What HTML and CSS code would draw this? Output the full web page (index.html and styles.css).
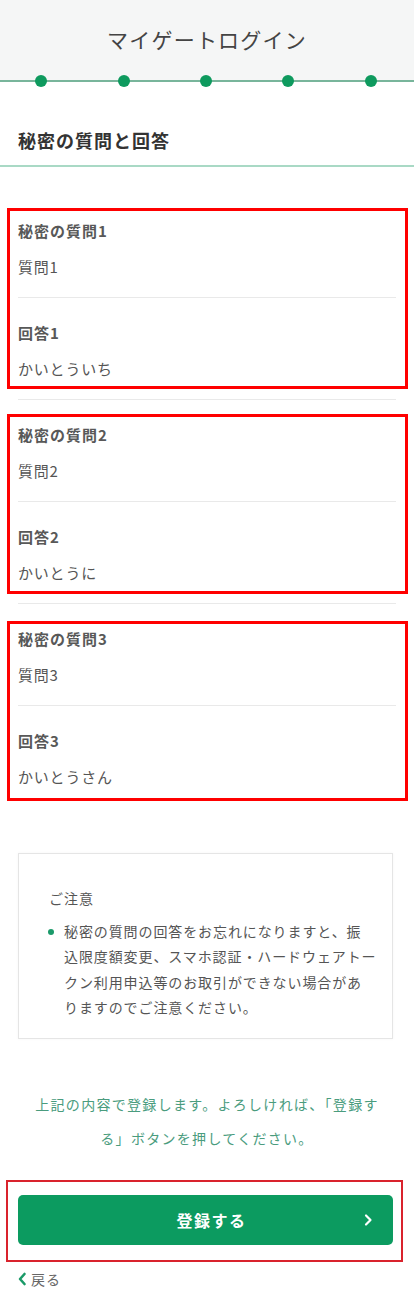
FILE: index.html
```html
<!DOCTYPE html>
<html lang="ja">
<head>
<meta charset="utf-8">
<title>マイゲートログイン</title>
<link rel="stylesheet" href="styles.css">
</head>
<body>
<div class="page">
  <header class="header">
    <h1 class="header-title">マイゲートログイン</h1>
  </header>
  <div class="steps">
    <span class="dot"></span><span class="dot"></span><span class="dot"></span><span class="dot"></span><span class="dot"></span>
  </div>

  <h2 class="section-title">秘密の質問と回答</h2>

  <div class="qa-list">
    <div class="qa-group mark-1">
      <div class="qa-row"><div class="qa-label">秘密の質問1</div><div class="qa-value">質問1</div></div>
      <div class="qa-row"><div class="qa-label">回答1</div><div class="qa-value">かいとういち</div></div>
    </div>
    <div class="qa-group mark-2">
      <div class="qa-row"><div class="qa-label">秘密の質問2</div><div class="qa-value">質問2</div></div>
      <div class="qa-row"><div class="qa-label">回答2</div><div class="qa-value">かいとうに</div></div>
    </div>
    <div class="qa-group mark-3">
      <div class="qa-row"><div class="qa-label">秘密の質問3</div><div class="qa-value">質問3</div></div>
      <div class="qa-row last"><div class="qa-label">回答3</div><div class="qa-value">かいとうさん</div></div>
    </div>
  </div>

  <div class="notice">
    <div class="notice-title">ご注意</div>
    <ul class="notice-list">
      <li>秘密の質問の回答をお忘れになりますと、振<br>込限度額変更、スマホ認証・ハードウェアトー<br>クン利用申込等のお取引ができない場合があ<br>りますのでご注意ください。</li>
    </ul>
  </div>

  <p class="confirm-text">上記の内容で登録します。よろしければ、「登録す<br>る」ボタンを押してください。</p>

  <div class="cta">
    <button class="btn-primary" type="button">
      <span class="btn-label">登録する</span>
      <svg class="btn-chevron" width="10" height="14" viewBox="0 0 10 14"><polyline points="3,2.5 7.5,7 3,11.5" fill="none" stroke="#ffffff" stroke-width="2.2" stroke-linecap="round" stroke-linejoin="round"/></svg>
    </button>
  </div>

  <a class="back-link" href="#">
    <svg class="back-chevron" width="10" height="14" viewBox="0 0 10 14"><polyline points="7.5,2 3,7 7.5,12" fill="none" stroke="#1b9a68" stroke-width="2.6" stroke-linecap="round" stroke-linejoin="round"/></svg>
    <span>戻る</span>
  </a>
</div>
</body>
</html>
```

FILE: styles.css
```css
* { box-sizing: border-box; }

body {
  margin: 0;
  background: #ffffff;
  font-family: "Noto Sans CJK JP", "Noto Sans", sans-serif;
  color: #555555;
}

.page {
  width: 414px;
  min-height: 1306px;
  overflow: hidden;
}

.header {
  height: 75px;
  background: #f5f6f6;
  display: flex;
  align-items: center;
  justify-content: center;
  padding-top: 2px;
}

.header-title {
  margin: 0;
  font-size: 21px;
  font-weight: 400;
  letter-spacing: 1.2px;
  color: #444444;
  line-height: 30px;
}

.steps {
  height: 12px;
  display: flex;
  justify-content: space-around;
  align-items: center;
  padding: 0 2px 0 0;
  background: linear-gradient(to bottom, #f5f6f6 0, #f5f6f6 5px, #78b59b 5px, #78b59b 7px, #ffffff 7px);
}

.dot {
  width: 12px;
  height: 12px;
  border-radius: 50%;
  background: #0e9a5e;
}

.section-title {
  margin: 0;
  padding: 40px 18px 12px;
  font-size: 18px;
  font-weight: 700;
  line-height: 26px;
  letter-spacing: 1px;
  color: #333333;
  border-bottom: 2px solid #a9d9c5;
}

.qa-list {
  margin: 29px 18px 0;
}

.qa-group {
  position: relative;
}

.qa-group::after {
  content: "";
  position: absolute;
  left: -11px;
  right: -12px;
  border: 3px solid #ff0000;
  pointer-events: none;
}

.mark-1::after { top: 12px; bottom: 11px; }
.mark-2::after { top: 14px; bottom: 10px; }
.mark-3::after { top: 17px; bottom: 6px; }

.qa-row {
  padding: 23px 0 18px;
  border-bottom: 1px solid #e9e9e9;
}

.qa-row.last {
  border-bottom: none;
}

.qa-label {
  font-size: 15px;
  font-weight: 700;
  line-height: 24px;
  letter-spacing: 1px;
  color: #585858;
}

.qa-value {
  margin-top: 12px;
  font-size: 15px;
  line-height: 24px;
  letter-spacing: 0.8px;
  color: #555555;
}

.notice {
  margin: 46px 21px 0 18px;
  border: 1px solid #e5e5e5;
  box-shadow: 0 0 3px rgba(0, 0, 0, 0.04);
  padding: 32px 10px 18px 30px;
}

.notice-title {
  font-size: 14px;
  line-height: 24px;
  letter-spacing: 1px;
  color: #555555;
}

.notice-list {
  list-style: none;
  margin: 9px 0 0;
  padding: 0;
}

.notice-list li {
  position: relative;
  padding-left: 15px;
  font-size: 14px;
  line-height: 25.3px;
  letter-spacing: 0.9px;
  white-space: nowrap;
  color: #555555;
}

.notice-list li::before {
  content: "";
  position: absolute;
  left: -1px;
  top: 10px;
  width: 6px;
  height: 6px;
  border-radius: 50%;
  background: #1b9a6a;
}

.confirm-text {
  margin: 48px 0 0;
  text-align: center;
  white-space: nowrap;
  font-size: 14px;
  line-height: 34px;
  letter-spacing: 1.3px;
  color: #4a9c7e;
}

.cta {
  position: relative;
  margin: 40px 21px 0 18px;
}

.cta::after {
  content: "";
  position: absolute;
  top: -15px;
  bottom: -17px;
  left: -12px;
  right: -10px;
  border: 2px solid #d9232d;
  pointer-events: none;
}

.btn-primary {
  width: 100%;
  height: 50px;
  border: none;
  border-radius: 5px;
  background: #0c9b60;
  display: flex;
  align-items: center;
  justify-content: center;
  position: relative;
  font-family: inherit;
  padding: 0;
}

.btn-label {
  font-size: 16px;
  font-weight: 700;
  letter-spacing: 1.5px;
  color: #ffffff;
  margin-left: 12px;
}

.btn-chevron {
  position: absolute;
  right: 20px;
  top: 18px;
}

.back-link {
  display: flex;
  align-items: center;
  gap: 4px;
  margin: 24px 0 0 17px;
  height: 20px;
  text-decoration: none;
  font-size: 14px;
  letter-spacing: 1px;
  color: #666666;
}
```
